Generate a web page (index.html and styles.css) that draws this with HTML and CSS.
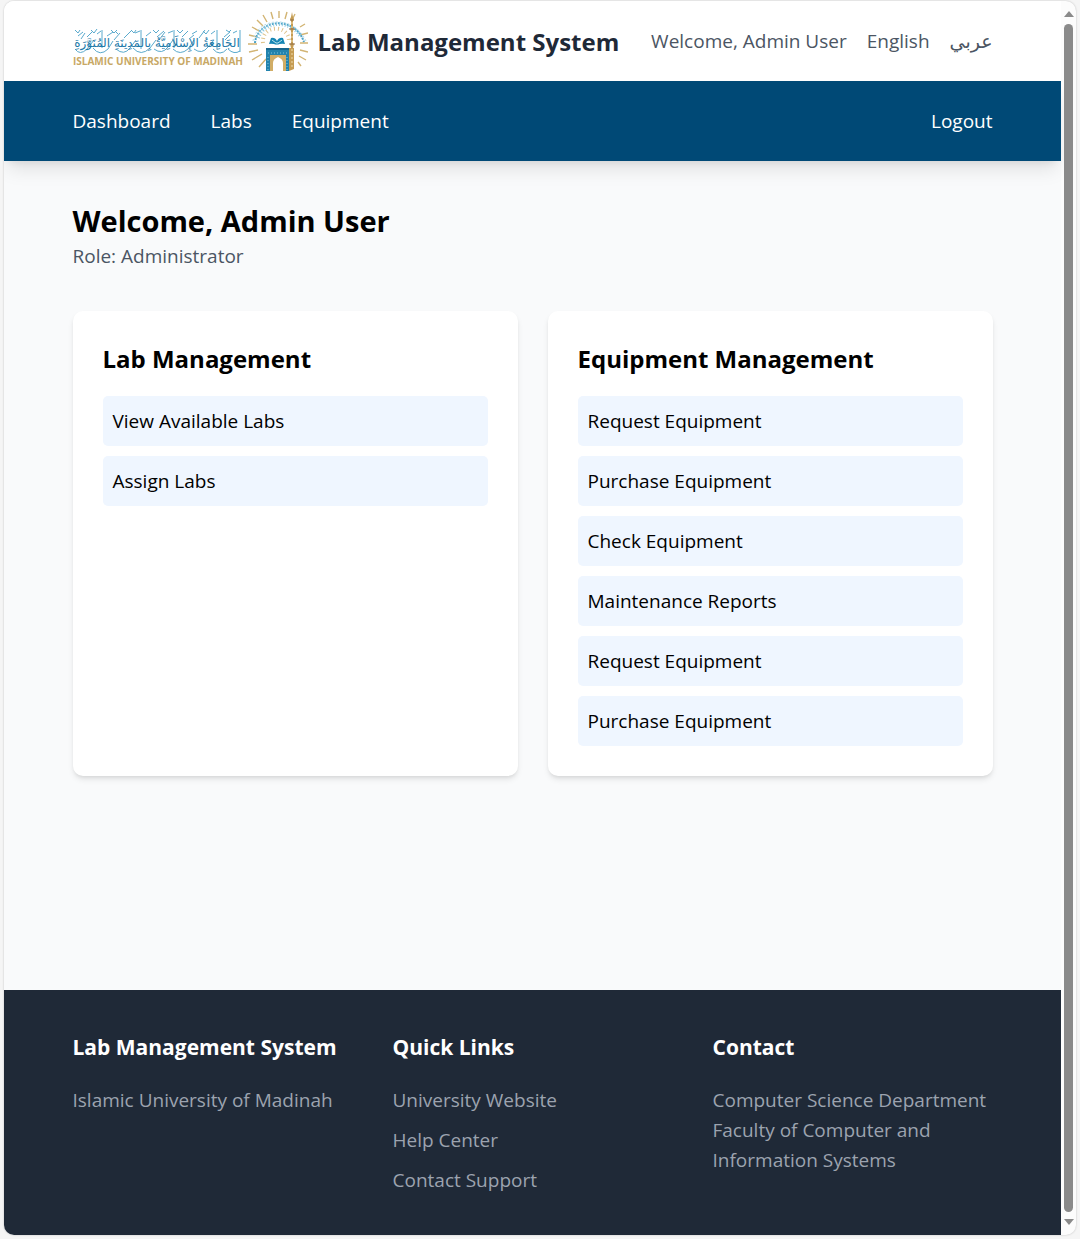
FILE: index.html
```html
<!DOCTYPE html>
<html lang="en">
<head>
<meta charset="utf-8">
<meta name="viewport" content="width=device-width, initial-scale=1">
<title>Lab Management System</title>
<link rel="stylesheet" href="styles.css">
</head>
<body>
<div class="window">
  <div class="page">
    <header class="topbar">
      <div class="container topbar-inner">
        <div class="brand">
          <svg class="logo" width="235" height="60" viewBox="0 0 235 60" role="img" aria-label="Islamic University of Madinah">
            <g class="logo-ornament">
              <path d="M5 25l5-4M14 26l6-6M24 23l4-3M29 37V19M34 25l6-4M45 23l-3-3M51 27l7-7M62 22l5-2M68 38V19M73 25l5-4M84 26l7-6M95 22l5-2M101 37V19M109 26l6-6M119 23l5-3M126 27l6-8M138 23l4-3M144 38V19M151 26l6-5M160 22l4-2M167 41V19"/>
              <path d="M2 19l3 3 2-3M18 19l3 3 3-4M38 19l3 3 3-3M58 19l3 3 2-3M80 19l3 3 3-3M104 19l3 3 3-3M130 20l3 3 3-4M153 19l3 2 2-2M12 22l-4 6M47 22l-6 7M92 21l-6 8M121 24l-5 4M157 24l-5 5"/>
              <path d="M2 38q5 7 12 0l7-9M20 37q7 9 15 1l5-8M43 38q8 7 14-1l6-8M60 37q8 9 17 0l6-8M81 38q8 6 14-2l5-7M100 38q7 7 15 0l6-9M121 38q8 6 14-2l6-7M140 38q7 8 14 0M155 38q6 6 12 2"/>
            </g>
            <text class="logo-arabic" x="84" y="36" text-anchor="middle" direction="rtl">الجَامِعَةُ الإِسْلَامِيَّةُ بِالمَدِينَةِ المُنَوَّرَةِ</text>
            <text class="logo-latin" x="0" y="54">ISLAMIC UNIVERSITY OF MADINAH</text>
            <g fill="none">
              <path stroke="#d2b473" stroke-width="1.4" d="M206 0v7M198 1l2 7M190 4l4 7M184 9l6 6M179 16l7 4M176 24l8 2M175 33h9M176 41l9-2M179 49l10-6M186 56l7-8M214 1l-2 7M222 3l-3 6M227 16l5-3M227 24l8-2M227 32h8M227 39l8 2M226 45l7 4M225 51l3 4"/>
              <path stroke="#dfc38b" stroke-dasharray="1 3" stroke-width="4" d="M190 32C188 13 217 13 216 31"/>
              <path stroke="#4fa4c9" stroke-dasharray="2 1" stroke-width="2" d="M182 32C184 8 222 4 231 31"/>
              <path stroke="#8bc8df" stroke-dasharray="1 2" stroke-width="4" d="M185 27C190 10 217 7 228 26"/>
              <path stroke="#b7dce9" stroke-dasharray="2 2" d="M180 30C184 6 221 3 233 30"/>
            </g>
            <path fill="#1686b5" d="M204 34q-5-2-8-1l2-6q4-1 6 3 2-4 6-3l2 6q-4-1-8 1z"/>
            <path fill="none" stroke="#bce5ec" d="M204 31v3M199 29l4 3M209 29l-4 3"/>
            <path fill="#2383ad" fill-rule="evenodd" d="M193 37h23v23h-3V44h-16v16h-4z"/>
            <path fill="#16658d" d="M193 37h23v2h-23z"/>
            <path fill="none" stroke="#7fc4dc" stroke-dasharray="1 2" d="M195 42h20M195 46v13M214 46v13"/>
            <path fill="#d1ad66" fill-rule="evenodd" d="M197 44h16v16h-3v-8q0-4-5-6-5 2-5 6v8h-3z"/>
            <path fill="#c59c53" d="M216 60V37h2l-1-4 1-1V20l-1-2 1-1v-7l-1-2 1-2 1-5 1 5 1 2-1 2v7l1 1-1 2v12l1 1-1 4h1v21z"/>
            <path fill="none" stroke="#8c6a45" d="M216 18h6M216 33h6M217 9h4"/>
            <path fill="none" stroke="#f0daa9" stroke-dasharray="2 2" d="M219 11v6M219 21v10M219 38v20"/>
          </svg>
          <span class="brand-name">Lab Management System</span>
        </div>
        <div class="account">
          <span>Welcome, Admin User</span>
          <a href="#en">English</a>
          <a href="#ar" lang="ar">عربي</a>
        </div>
      </div>
    </header>
    <nav class="nav">
      <div class="container nav-inner">
        <a href="#dashboard">Dashboard</a>
        <a href="#labs">Labs</a>
        <a href="#equipment">Equipment</a>
        <button class="logout" type="button">Logout</button>
      </div>
    </nav>
    <main class="container main">
      <h1>Welcome, Admin User</h1>
      <p class="role">Role: Administrator</p>
      <div class="cards">
        <section class="card">
          <h2>Lab Management</h2>
          <ul class="actions">
            <li><a href="#view-labs">View Available Labs</a></li>
            <li><a href="#assign-labs">Assign Labs</a></li>
          </ul>
        </section>
        <section class="card">
          <h2>Equipment Management</h2>
          <ul class="actions">
            <li><a href="#request">Request Equipment</a></li>
            <li><a href="#purchase">Purchase Equipment</a></li>
            <li><a href="#check">Check Equipment</a></li>
            <li><a href="#maintenance">Maintenance Reports</a></li>
            <li><a href="#request">Request Equipment</a></li>
            <li><a href="#purchase">Purchase Equipment</a></li>
          </ul>
        </section>
      </div>
    </main>
    <footer class="footer">
      <div class="container footer-grid">
        <section>
          <h3>Lab Management System</h3>
          <p>Islamic University of Madinah</p>
        </section>
        <section>
          <h3>Quick Links</h3>
          <ul class="links">
            <li><a href="#university">University Website</a></li>
            <li><a href="#help">Help Center</a></li>
            <li><a href="#support">Contact Support</a></li>
          </ul>
        </section>
        <section>
          <h3>Contact</h3>
          <p>Computer Science Department</p>
          <p>Faculty of Computer and Information Systems</p>
        </section>
      </div>
    </footer>
  </div>
  <div class="scrollbar" aria-hidden="true">
    <svg width="10" height="6" viewBox="0 0 10 6"><path d="M5 0l5 6H0z"/></svg>
    <div class="thumb"></div>
    <svg width="10" height="6" viewBox="0 0 10 6"><path d="M0 0h10L5 6z"/></svg>
  </div>
</div>
</body>
</html>
```
FILE: styles.css
```css
* { box-sizing: border-box; }
body {
  margin: 0;
  padding: 1px 4px 4px;
  min-height: 100vh;
  display: flex;
  background: #f5f5f5;
  color: #000;
  font: 19px/30px "Segoe UI", "Open Sans", "DejaVu Sans", sans-serif;
}
h1, h2, h3, p, ul { margin: 0; padding: 0; }
ul { list-style: none; }
a { color: inherit; text-decoration: none; }
.window {
  flex: 1;
  min-width: 0;
  display: flex;
  overflow: hidden;
  border-radius: 10px;
  background: #fcfcfc;
  box-shadow: 0 0 2px #bbb;
}
.page {
  flex: 1;
  min-width: 0;
  display: flex;
  flex-direction: column;
  background: #f9fafb;
}
.container {
  width: 100%;
  max-width: 960px;
  margin: 0 auto;
  padding: 0 20px;
}
.topbar { background: #fff; }
.topbar-inner {
  min-height: 80px;
  display: flex;
  align-items: center;
  justify-content: space-between;
}
.brand { display: flex; align-items: center; gap: 10px; }
.brand-name {
  color: #1f2937;
  font-size: 24px;
  font-weight: 700;
  line-height: 35px;
}
.logo { display: block; }
.logo-arabic {
  font-family: "DejaVu Sans", sans-serif;
  font-size: 12px;
  fill: #1c79a8;
}
.logo-latin {
  font-family: "Open Sans", sans-serif;
  font-size: 10px;
  font-weight: 700;
  fill: #c8a865;
}
.logo-ornament { fill: none; stroke: #5aaacd; }
.account { display: flex; gap: 20px; color: #4b5563; }
.nav {
  background: #004976;
  color: #fff;
  box-shadow: 0 12px 18px -4px rgba(0, 0, 0, .1), 0 5px 8px -5px rgba(0, 0, 0, .1);
}
.nav-inner {
  min-height: 80px;
  display: flex;
  align-items: center;
  gap: 40px;
}
.logout {
  margin-left: auto;
  padding: 0;
  border: 0;
  background: none;
  color: inherit;
  font: inherit;
  cursor: pointer;
}
.main { flex: 1; padding: 40px 20px; }
h1 { font-size: 29px; line-height: 40px; }
.role { color: #4b5563; }
.cards {
  margin-top: 40px;
  display: grid;
  grid-template-columns: 1fr 1fr;
  gap: 30px;
}
.card {
  padding: 30px;
  border-radius: 10px;
  background: #fff;
  box-shadow: 0 4px 6px -1px rgba(0, 0, 0, .1), 0 2px 4px -2px rgba(0, 0, 0, .1);
}
h2 { margin-bottom: 20px; font-size: 24px; line-height: 35px; }
.actions { display: grid; gap: 10px; }
.actions a {
  display: block;
  padding: 10px;
  border-radius: 5px;
  background: #eff6ff;
}
.footer { padding: 40px 0; background: #1f2937; color: #9ca3af; }
.footer-grid {
  display: grid;
  grid-template-columns: repeat(3, 1fr);
  gap: 40px;
}
h3 { margin-bottom: 20px; color: #fff; font-size: 21px; line-height: 35px; }
.links { display: grid; gap: 10px; }
.scrollbar {
  width: 15px;
  padding: 10px 0;
  display: flex;
  flex-direction: column;
  align-items: center;
  gap: 7px;
}
.scrollbar svg { fill: #8a8a8a; }
.thumb { flex: 1; width: 9px; border-radius: 5px; background: #8a8a8a; }
```
